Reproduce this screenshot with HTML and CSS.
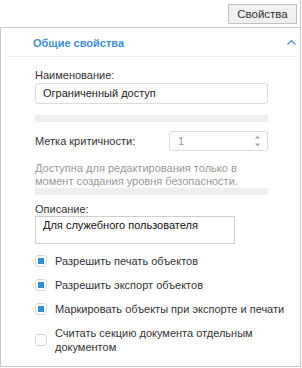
FILE: index.html
```html
<!DOCTYPE html>
<html lang="ru">
<head>
    <meta charset="UTF-8">
    <title>Свойства</title>
    <link rel="stylesheet" href="styles.css">
</head>
<body>
    <div class="window">
        <div class="toolbar">
            <button class="tool-button">Свойства</button>
        </div>

        <div class="panel">
            <div class="panel-header">
                <span class="panel-title">Общие свойства</span>
                <svg class="chevron" width="9" height="6" viewBox="0 0 9 6">
                    <path d="M0.5 5.5 L4.5 1.5 L8.5 5.5" fill="none" stroke="#3a8fd6" stroke-width="1.2"/>
                </svg>
            </div>

            <div class="panel-body">
                <!-- Name -->
                <div class="field-label">Наименование:</div>
                <div class="text-input">Ограниченный доступ</div>

                <div class="separator"></div>

                <!-- Criticality -->
                <div class="field-row">
                    <span class="row-label">Метка критичности:</span>
                    <div class="spin-input">
                        <span class="spin-value">1</span>
                        <svg class="spin-arrows" width="7" height="14" viewBox="0 0 7 14">
                            <path d="M1 4.5 L3.5 1.5 L6 4.5 Z" fill="#aaa"/>
                            <path d="M1 9.5 L3.5 12.5 L6 9.5 Z" fill="#aaa"/>
                        </svg>
                    </div>
                </div>

                <div class="hint">Доступна для редактирования только в<br>момент создания уровня безопасности.</div>

                <div class="separator thin"></div>

                <!-- Description -->
                <div class="field-label">Описание:</div>
                <div class="text-area">Для служебного пользователя</div>

                <!-- Options -->
                <div class="options">
                    <label class="option"><span class="checkbox checked"></span><span>Разрешить печать объектов</span></label>
                    <label class="option"><span class="checkbox checked"></span><span>Разрешить экспорт объектов</span></label>
                    <label class="option"><span class="checkbox checked"></span><span>Маркировать объекты при экспорте и печати</span></label>
                    <label class="option"><span class="checkbox"></span><span>Считать секцию документа отдельным документом</span></label>
                </div>
            </div>
        </div>
    </div>
</body>
</html>
```

FILE: styles.css
```css
* {
    box-sizing: border-box;
}

body {
    margin: 0;
    background: #fff;
    font-family: "Liberation Sans", Arial, sans-serif;
    font-size: 11px;
    color: #333;
}

.window {
    width: 301px;
    height: 367px;
    border-right: 1px solid #c8c8c8;
    display: flex;
    flex-direction: column;
}

/* Top toolbar */
.toolbar {
    height: 28px;
    flex-shrink: 0;
    border-bottom: 1px solid #c8c8c8;
    display: flex;
    justify-content: flex-end;
    align-items: flex-start;
    padding: 4px 3px 0 0;
}

.tool-button {
    width: 69px;
    height: 20px;
    padding: 0;
    background: #f0f0f0;
    border: 1px solid #c2c2c2;
    border-radius: 0;
    font-family: inherit;
    font-size: 11.5px;
    color: #333;
}

/* Panel */
.panel {
    flex-grow: 1;
    border-left: 1px solid #c8c8c8;
    border-bottom: 1px solid #c8c8c8;
}

.panel-header {
    height: 29px;
    margin: 0 4px 0 7px;
    padding: 1px 0 0 25px;
    border-bottom: 1px solid #f0f0f0;
    display: flex;
    align-items: center;
    justify-content: space-between;
}

.panel-title {
    color: #3a8fd6;
    font-weight: bold;
}

.chevron {
    margin-top: -2px;
}

.panel-body {
    padding: 11px 4px 0 34px;
}

.field-label {
    line-height: 14px;
}

.text-input {
    margin-top: 1px;
    width: 233px;
    height: 21px;
    line-height: 19px;
    padding-left: 7px;
    border: 1px solid #dcdcdc;
    border-radius: 3px;
    color: #222;
}

.separator {
    width: 233px;
    height: 7px;
    margin: 11px 0 9px;
    background: #eee;
}

.separator.thin {
    margin: 0 0 7px;
}

.field-row {
    width: 233px;
    display: flex;
    align-items: center;
    justify-content: space-between;
}

.spin-input {
    width: 99px;
    height: 20px;
    border: 1px solid #dcdcdc;
    border-radius: 3px;
    display: flex;
    align-items: center;
    justify-content: space-between;
    padding: 0 6px 0 8px;
}

.spin-value {
    color: #999;
}

.hint {
    margin-top: 11px;
    line-height: 13px;
    color: #999;
}

.text-area {
    width: 200px;
    height: 28px;
    padding: 1px 0 0 7px;
    line-height: 14px;
    border: 1px solid #cfcfcf;
    color: #111;
}

/* Checkboxes */
.options {
    margin-top: 10px;
    display: flex;
    flex-direction: column;
    gap: 10px;
}

.option {
    display: flex;
    align-items: center;
    gap: 8px;
    line-height: 14px;
}

.checkbox {
    flex-shrink: 0;
    width: 12px;
    height: 12px;
    border: 1px solid #d6d6d6;
    border-radius: 3px;
    position: relative;
}

.checkbox.checked::after {
    content: "";
    position: absolute;
    left: 2px;
    top: 2px;
    width: 6px;
    height: 6px;
    background: #2b8fd6;
}
```
